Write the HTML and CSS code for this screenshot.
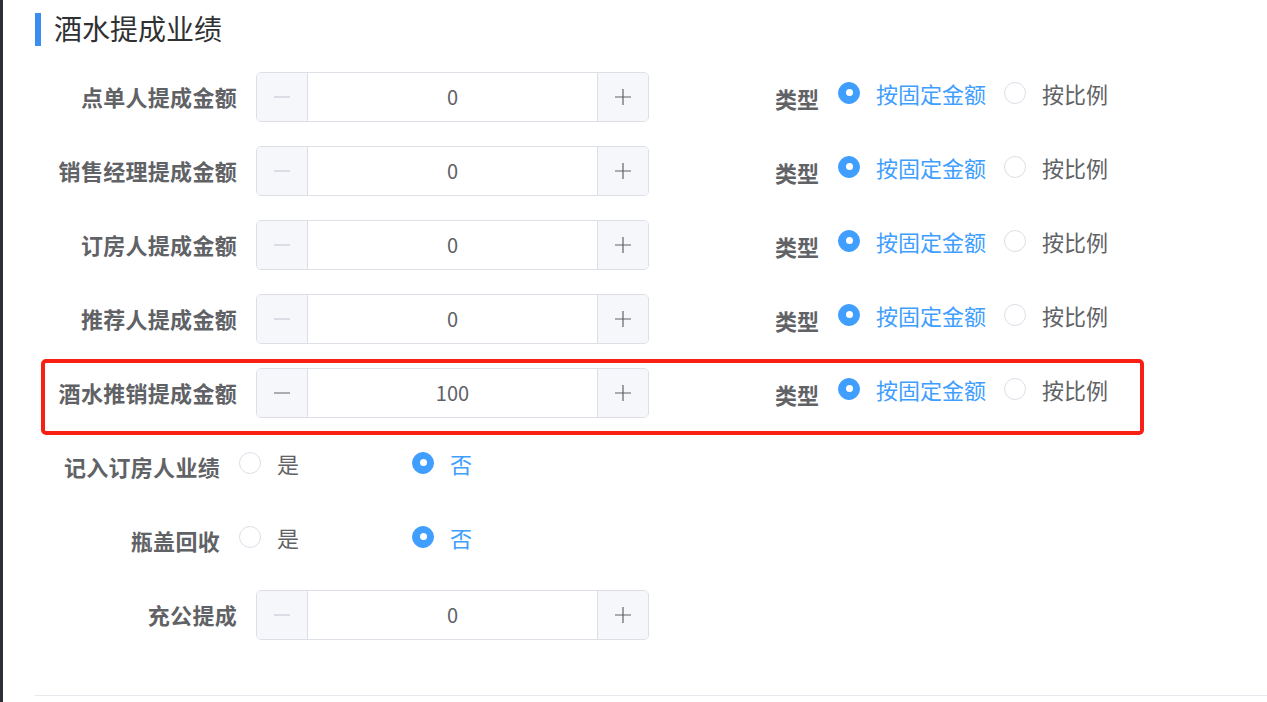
FILE: index.html
```html
<!DOCTYPE html>
<html lang="zh-CN">
<head>
    <meta charset="UTF-8">
    <meta name="viewport" content="width=device-width, initial-scale=1.0">
    <title>酒水提成业绩</title>
    <link rel="stylesheet" href="styles.css">
</head>
<body>
    <div class="side-edge"></div>

    <div class="main">
        <h2 class="section-title">酒水提成业绩</h2>

        <form class="commission-form">
            <div class="form-row">
                <label class="form-label">点单人提成金额</label>
                <div class="number-input">
                    <span class="step minus disabled"><svg width="16" height="16" viewBox="0 0 16 16"><line x1="0" y1="8" x2="16" y2="8"/></svg></span>
                    <span class="value">0</span>
                    <span class="step plus"><svg width="16" height="16" viewBox="0 0 16 16"><line x1="0" y1="8" x2="16" y2="8"/><line x1="8" y1="0" x2="8" y2="16"/></svg></span>
                </div>
                <div class="type-field">
                    <span class="type-label">类型</span>
                    <div class="radio-group">
                        <span class="radio checked"><i class="radio-dot"></i>按固定金额</span>
                        <span class="radio"><i class="radio-dot"></i>按比例</span>
                    </div>
                </div>
            </div>

            <div class="form-row">
                <label class="form-label">销售经理提成金额</label>
                <div class="number-input">
                    <span class="step minus disabled"><svg width="16" height="16" viewBox="0 0 16 16"><line x1="0" y1="8" x2="16" y2="8"/></svg></span>
                    <span class="value">0</span>
                    <span class="step plus"><svg width="16" height="16" viewBox="0 0 16 16"><line x1="0" y1="8" x2="16" y2="8"/><line x1="8" y1="0" x2="8" y2="16"/></svg></span>
                </div>
                <div class="type-field">
                    <span class="type-label">类型</span>
                    <div class="radio-group">
                        <span class="radio checked"><i class="radio-dot"></i>按固定金额</span>
                        <span class="radio"><i class="radio-dot"></i>按比例</span>
                    </div>
                </div>
            </div>

            <div class="form-row">
                <label class="form-label">订房人提成金额</label>
                <div class="number-input">
                    <span class="step minus disabled"><svg width="16" height="16" viewBox="0 0 16 16"><line x1="0" y1="8" x2="16" y2="8"/></svg></span>
                    <span class="value">0</span>
                    <span class="step plus"><svg width="16" height="16" viewBox="0 0 16 16"><line x1="0" y1="8" x2="16" y2="8"/><line x1="8" y1="0" x2="8" y2="16"/></svg></span>
                </div>
                <div class="type-field">
                    <span class="type-label">类型</span>
                    <div class="radio-group">
                        <span class="radio checked"><i class="radio-dot"></i>按固定金额</span>
                        <span class="radio"><i class="radio-dot"></i>按比例</span>
                    </div>
                </div>
            </div>

            <div class="form-row">
                <label class="form-label">推荐人提成金额</label>
                <div class="number-input">
                    <span class="step minus disabled"><svg width="16" height="16" viewBox="0 0 16 16"><line x1="0" y1="8" x2="16" y2="8"/></svg></span>
                    <span class="value">0</span>
                    <span class="step plus"><svg width="16" height="16" viewBox="0 0 16 16"><line x1="0" y1="8" x2="16" y2="8"/><line x1="8" y1="0" x2="8" y2="16"/></svg></span>
                </div>
                <div class="type-field">
                    <span class="type-label">类型</span>
                    <div class="radio-group">
                        <span class="radio checked"><i class="radio-dot"></i>按固定金额</span>
                        <span class="radio"><i class="radio-dot"></i>按比例</span>
                    </div>
                </div>
            </div>

            <div class="form-row highlighted">
                <label class="form-label">酒水推销提成金额</label>
                <div class="number-input">
                    <span class="step minus"><svg width="16" height="16" viewBox="0 0 16 16"><line x1="0" y1="8" x2="16" y2="8"/></svg></span>
                    <span class="value">100</span>
                    <span class="step plus"><svg width="16" height="16" viewBox="0 0 16 16"><line x1="0" y1="8" x2="16" y2="8"/><line x1="8" y1="0" x2="8" y2="16"/></svg></span>
                </div>
                <div class="type-field">
                    <span class="type-label">类型</span>
                    <div class="radio-group">
                        <span class="radio checked"><i class="radio-dot"></i>按固定金额</span>
                        <span class="radio"><i class="radio-dot"></i>按比例</span>
                    </div>
                </div>
            </div>

            <div class="form-row short-label">
                <label class="form-label">记入订房人业绩</label>
                <div class="radio-group yes-no">
                    <span class="radio"><i class="radio-dot"></i>是</span>
                    <span class="radio checked"><i class="radio-dot"></i>否</span>
                </div>
            </div>

            <div class="form-row short-label">
                <label class="form-label">瓶盖回收</label>
                <div class="radio-group yes-no">
                    <span class="radio"><i class="radio-dot"></i>是</span>
                    <span class="radio checked"><i class="radio-dot"></i>否</span>
                </div>
            </div>

            <div class="form-row">
                <label class="form-label">充公提成</label>
                <div class="number-input">
                    <span class="step minus disabled"><svg width="16" height="16" viewBox="0 0 16 16"><line x1="0" y1="8" x2="16" y2="8"/></svg></span>
                    <span class="value">0</span>
                    <span class="step plus"><svg width="16" height="16" viewBox="0 0 16 16"><line x1="0" y1="8" x2="16" y2="8"/><line x1="8" y1="0" x2="8" y2="16"/></svg></span>
                </div>
            </div>
        </form>

        <div class="divider"></div>
    </div>
</body>
</html>
```

FILE: styles.css
```css
html, body {
    height: 100%;
}
body {
    margin: 0;
    display: flex;
    background: #fff;
    font-family: "Noto Sans CJK SC", "Noto Sans", sans-serif;
    color: #606266;
    overflow: hidden;
}
.side-edge {
    width: 3px;
    flex-shrink: 0;
    background: #2d2f36;
}
.main {
    flex: 1;
    min-width: 0;
}
.section-title {
    margin: 13px 0 0 32px;
    padding-left: 13px;
    border-left: 6px solid #3a8ef0;
    height: 33px;
    line-height: 31px;
    font-size: 28px;
    font-weight: normal;
    color: #303133;
}
.commission-form {
    margin-top: 26px;
}
.form-row {
    display: flex;
    align-items: center;
    height: 50px;
    margin-bottom: 24px;
}
.form-label {
    box-sizing: border-box;
    width: 253px;
    padding-right: 19px;
    text-align: right;
    font-size: 22px;
    letter-spacing: 0.3px;
    font-weight: bold;
    color: #606266;
    line-height: 50px;
    margin-bottom: 2px;
}
.short-label .form-label {
    width: 236px;
}
.number-input {
    box-sizing: border-box;
    display: flex;
    width: 393px;
    height: 50px;
    border: 1px solid #dcdfe6;
    border-radius: 5px;
    overflow: hidden;
}
.step {
    width: 50px;
    flex-shrink: 0;
    display: flex;
    align-items: center;
    justify-content: center;
    background: #f5f7fa;
    stroke: #606266;
    stroke-width: 1.2;
}
.step.minus {
    border-right: 1px solid #dcdfe6;
}
.step.plus {
    border-left: 1px solid #dcdfe6;
}
.step.disabled {
    stroke: #c0c4cc;
}
.value {
    flex: 1;
    text-align: center;
    font-size: 20px;
    line-height: 48px;
    color: #606266;
}
.type-field {
    display: flex;
    align-items: center;
    margin-left: 126px;
}
.type-label {
    font-size: 22px;
    font-weight: bold;
    color: #606266;
    margin-right: 19px;
    padding-top: 1px;
}
.radio-group {
    display: flex;
    align-items: center;
    margin-bottom: 9px;
}
.radio {
    display: flex;
    align-items: center;
    font-size: 22px;
    color: #606266;
    margin-right: 18px;
}
.radio.checked {
    color: #409eff;
}
.radio-dot {
    box-sizing: border-box;
    width: 22px;
    height: 22px;
    margin-right: 16px;
    border: 1px solid #dcdfe6;
    border-radius: 50%;
    background: #fff;
    display: flex;
    align-items: center;
    justify-content: center;
}
.radio.checked .radio-dot {
    border-color: #409eff;
    background: #409eff;
}
.radio.checked .radio-dot::after {
    content: "";
    width: 7px;
    height: 7px;
    border-radius: 50%;
    background: #fff;
}
.yes-no .radio {
    margin-right: 0;
    width: 173px;
}
.highlighted {
    position: relative;
}
.highlighted::after {
    content: "";
    position: absolute;
    left: 38px;
    top: -9px;
    width: 1103px;
    height: 76px;
    box-sizing: border-box;
    border: 4px solid #fa1f14;
    border-radius: 5px;
    pointer-events: none;
}
.divider {
    margin: 55px 0 0 32px;
    height: 1px;
    background: #e8eaef;
}
```
